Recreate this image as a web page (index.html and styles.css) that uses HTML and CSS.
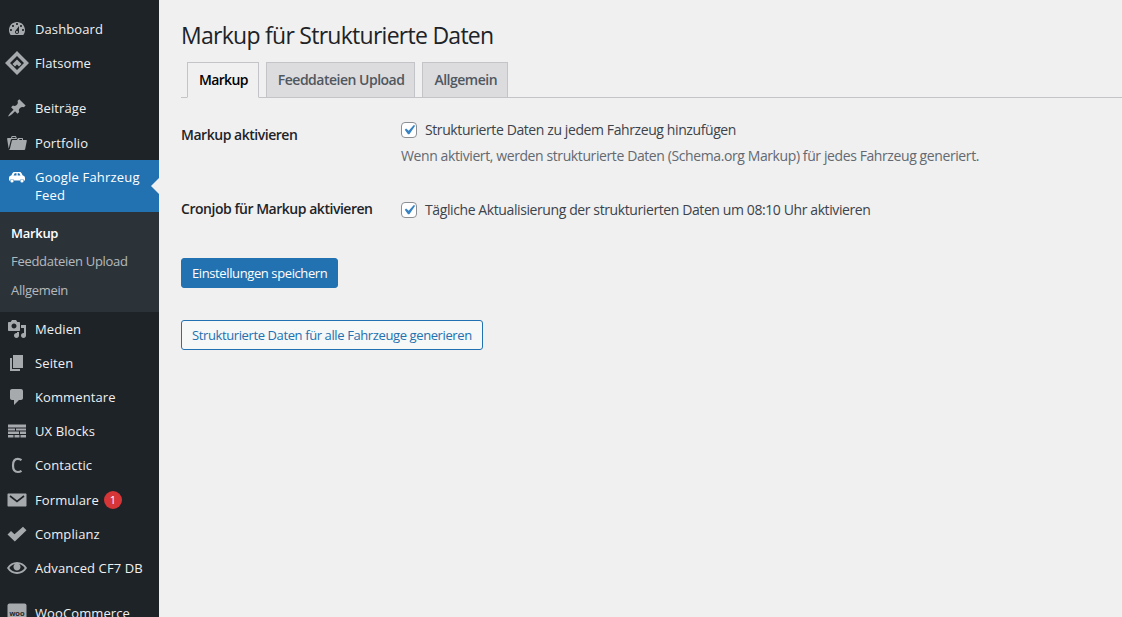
FILE: index.html
```html
<!DOCTYPE html>
<html lang="de">
<head>
<meta charset="utf-8">
<title>Markup für Strukturierte Daten</title>
<link rel="stylesheet" href="styles.css">
</head>
<body>
<div class="page">
<nav class="sidebar">
  <ul class="menu">
    <li class="item"><svg class="ico" viewBox="0 0 20 20"><path d="M3.76 16h12.48c1.1-1.37 1.76-3.11 1.76-5 0-4.42-3.58-8-8-8s-8 3.58-8 8c0 1.89.66 3.63 1.76 5zM10 4c.55 0 1 .45 1 1s-.45 1-1 1-1-.45-1-1 .45-1 1-1zM6 6c.55 0 1 .45 1 1s-.45 1-1 1-1-.45-1-1 .45-1 1-1zm8 0c.55 0 1 .45 1 1s-.45 1-1 1-1-.45-1-1 .45-1 1-1zm-5.37 5.55L12 7v6c0 1.1-.9 2-2 2s-2-.9-2-2c0-.57.24-1.08.63-1.45zM4 10c.55 0 1 .45 1 1s-.45 1-1 1-1-.45-1-1 .45-1 1-1zm12 0c.55 0 1 .45 1 1s-.45 1-1 1-1-.45-1-1 .45-1 1-1zm-5 3c0-.55-.45-1-1-1s-1 .45-1 1 .45 1 1 1 1-.45 1-1z"/></svg><span>Dashboard</span></li>
    <li class="item"><svg class="ico ico-flat" viewBox="0 0 24 24"><path fill-rule="evenodd" d="M12 0l12 12-12 12L0 12zM12 5l-7 7 7 7 7-7zM12 8.500l4.500 4.500-2.500 2.500-2-2-2 2-2.500-2.500z"/></svg><span>Flatsome</span></li>
    <li class="sep"></li>
    <li class="item"><svg class="ico" viewBox="0 0 20 20"><path d="M10.44 3.02l1.82-1.82 6.36 6.35-1.83 1.82c-1.05-.68-2.48-.57-3.41.36l-.75.75c-.92.93-1.04 2.35-.35 3.41l-1.83 1.82-2.41-2.41-2.8 2.79c-.42.42-3.38 2.71-3.8 2.29s1.86-3.39 2.28-3.81l2.79-2.79L4.1 9.36l1.83-1.82c1.05.69 2.48.57 3.4-.36l.75-.75c.93-.92 1.05-2.35.36-3.41z"/></svg><span>Beiträge</span></li>
    <li class="item"><svg class="ico" viewBox="0 0 20 20"><path d="M4 5H.78c-.37 0-.74.32-.69.84l1.56 9.99S3.5 8.47 3.86 6.7c.11-.53.61-.7.98-.7H10s-.7-2.08-.77-2.31C9.11 3.25 8.89 3 8.45 3H5.14c-.36 0-.7.23-.8.64C4.25 4.04 4 5 4 5zm4.88 0h-4s.42-1 .87-1h2.13c.48 0 1 1 1 1zM2.67 16.25c-.31.47-.76.75-1.26.75h15.73c.54 0 .92-.31 1.03-.83.44-2.19 1.68-8.44 1.68-8.44.07-.5-.3-.73-.62-.73H16V5.53c0-.16-.26-.53-.66-.53h-3.76c-.52 0-.87.58-.87.58L10 7H5.59c-.32 0-.63.19-.69.5 0 0-1.59 6.7-1.72 7.33-.07.37-.22.99-.51 1.42zM15.01 7H12l.63-1h2.38v1z"/></svg><span>Portfolio</span></li>
    <li class="item current"><svg class="ico" viewBox="0 0 20 20"><path fill-rule="evenodd" d="M7.500 5h5c1 0 1.600.5 2.100 1.300L15.700 8.500c1.400.3 2.300 1.200 2.300 2.500v2.500h-1a2.100 2.100 0 0 0-4 0H7a2.100 2.100 0 0 0-4 0H2V11c0-1.300.9-2.200 2.300-2.500L5.400 6.300C5.900 5.500 6.500 5 7.500 5zM7.800 6.300 6.500 8.500h3V6.300zM10.700 6.300v2.200h2.800L12.200 6.300zM5 12.300a1.600 1.600 0 1 1 0 3.200 1.600 1.600 0 0 1 0-3.200zM15 12.300a1.600 1.600 0 1 1 0 3.200 1.600 1.600 0 0 1 0-3.200z"/></svg><span>Google Fahrzeug Feed</span></li>
    <li class="submenu">
      <a class="sub active">Markup</a>
      <a class="sub">Feeddateien Upload</a>
      <a class="sub">Allgemein</a>
    </li>
    <li class="item"><svg class="ico" viewBox="0 0 20 20"><path d="M13 11V4c0-.55-.45-1-1-1h-1.670L9 1H5L3.670 3H2c-.55 0-1 .45-1 1v7c0 .55.45 1 1 1h10c.55 0 1-.45 1-1zM7 4.500c1.380 0 2.500 1.120 2.500 2.500S8.380 9.500 7 9.500 4.500 8.380 4.500 7 5.620 4.500 7 4.500zM14 6h5v10.500c0 1.380-1.120 2.500-2.500 2.500S14 17.880 14 16.500s1.120-2.500 2.500-2.500c.17 0 .34.02.5.05V9h-3V6zm-4 8.050V13h2v3.500c0 1.380-1.120 2.500-2.500 2.500S7 17.880 7 16.500 8.120 14 9.500 14c.17 0 .34.02.5.05z"/></svg><span>Medien</span></li>
    <li class="item"><svg class="ico" viewBox="0 0 20 20"><path d="M6 15V2h10v13H6zm-1 1h8v2H3V5h2v11z"/></svg><span>Seiten</span></li>
    <li class="item"><svg class="ico" viewBox="0 0 20 20"><path d="M5 2h9c1.100 0 2 .9 2 2v7c0 1.100-.9 2-2 2h-2l-5 5v-5H5c-1.100 0-2-.9-2-2V4c0-1.100.9-2 2-2z"/></svg><span>Kommentare</span></li>
    <li class="item"><svg class="ico" viewBox="0 0 20 20"><path d="M1 3.500h18v3H1zM1 7.500h7v2H1zM9 7.500h10v2H9zM1 10.500h11v2.500H1zM13 10.500h6v2.500h-6zM1 14h5.500v2.500H1zM7.500 14h5v2.500h-5zM13.500 14H19v2.500h-5.500z"/></svg><span>UX Blocks</span></li>
    <li class="item"><svg class="ico" viewBox="0 0 20 20"><path class="ring" d="M14.500 5.200C13 4 11.800 3.900 10.800 3.900 7.500 3.900 6 6.800 6 10.500 6 14.200 7.500 17 10.800 17 11.800 17 13 16.900 14.500 15.800"/></svg><span>Contactic</span></li>
    <li class="item"><svg class="ico" viewBox="0 0 20 20"><path d="M1.500 3.500h17c.6 0 1 .4 1 1v11c0 .6-.4 1-1 1h-17c-.6 0-1-.4-1-1v-11c0-.6.4-1 1-1z"/><path class="mail-v" d="M3 6l7 5.500L17 6"/></svg><span>Formulare</span><b class="badge">1</b></li>
    <li class="item"><svg class="ico" viewBox="0 0 20 20"><path d="M.5 10.500 4 7l3.500 3.200L16 2.800 19.500 6.300 7.800 17.500z"/></svg><span>Complianz</span></li>
    <li class="item"><svg class="ico" viewBox="0 0 20 20"><path d="M19.700 9.400C17.700 6 14 3.900 10 3.900S2.300 6 .3 9.400L0 10l.3.6c2 3.400 5.700 5.500 9.700 5.500s7.700-2.100 9.700-5.500l.3-.6-.3-.6zM10 14.100c-3.100 0-6-1.600-7.700-4.100C3.600 8 5.700 6.600 8 6.100c-.9.6-1.500 1.700-1.500 2.900 0 1.900 1.600 3.500 3.500 3.500s3.500-1.600 3.500-3.500c0-1.200-.6-2.300-1.500-2.900 2.300.5 4.400 1.900 5.700 3.900-1.700 2.500-4.600 4.100-7.700 4.100z"/></svg><span>Advanced CF7 DB</span></li>
    <li class="sep"></li>
    <li class="item"><svg class="ico" viewBox="0 0 20 20"><rect x="0.500" y="0.500" width="19" height="19" rx="2"/><text class="woo" x="10" y="12.500" text-anchor="middle">woo</text></svg><span>WooCommerce</span></li>
  </ul>
</nav>
<main class="content">
  <h1 class="title">Markup für Strukturierte Daten</h1>
  <div class="tabs">
    <a class="tab tab-on">Markup</a>
    <a class="tab">Feeddateien Upload</a>
    <a class="tab">Allgemein</a>
  </div>
  <div class="form">
    <div class="row row-first">
      <div class="label">Markup aktivieren</div>
      <div class="field">
        <label class="check"><span class="box"><svg viewBox="0 0 20 20"><path d="M14.830 4.890l1.340.94-5.810 8.380H9.020L5.780 9.670l1.340-1.250 2.570 2.400z"/></svg></span>Strukturierte Daten zu jedem Fahrzeug hinzufügen</label>
        <p class="desc">Wenn aktiviert, werden strukturierte Daten (Schema.org Markup) für jedes Fahrzeug generiert.</p>
      </div>
    </div>
    <div class="row">
      <div class="label label-tight">Cronjob für Markup aktivieren</div>
      <div class="field">
        <label class="check"><span class="box"><svg viewBox="0 0 20 20"><path d="M14.830 4.890l1.340.94-5.810 8.380H9.020L5.780 9.670l1.340-1.250 2.570 2.400z"/></svg></span>Tägliche Aktualisierung der strukturierten Daten um 08:10 Uhr aktivieren</label>
      </div>
    </div>
  </div>
  <button class="btn primary">Einstellungen speichern</button>
  <button class="btn secondary">Strukturierte Daten für alle Fahrzeuge generieren</button>
</main>
</div>
</body>
</html>
```
FILE: styles.css
```css
* { box-sizing: border-box; }
html, body { margin: 0; height: 100%; overflow: hidden; }
body {
  background: #f0f0f1;
  color: #3c434a;
  font-family: "Open Sans", "Noto Sans", sans-serif;
  font-size: 13px;
  line-height: 1.4;
}
.page { display: flex; height: 617px; overflow: hidden; }
.sidebar { width: 159px; flex: none; background: #1d2327; overflow: hidden; }
.menu { list-style: none; margin: 0; padding: 12px 0 0; }
.item {
  display: flex;
  align-items: flex-start;
  padding: 8px 8px 8px 7px;
  color: #f0f0f1;
  position: relative;
}
.item > span { margin-left: 8px; letter-spacing: 0.1px; }
.ico { width: 20px; height: 20px; flex: none; fill: #a7aaad; margin: -1px 0 -1px; }
.ico-flat { width: 24px; height: 24px; margin: -3px -2px -3px -2px; }
.ring { fill: none; stroke: #a7aaad; stroke-width: 2.200; }
.mail-v { fill: none; stroke: #1d2327; stroke-width: 1.600; }
.woo { fill: #1d2327; font-family: "Liberation Sans", sans-serif; font-size: 7.500px; font-weight: 700; }
.sep { height: 11px; }
.current { background: #2271b1; color: #fff; padding-right: 12px; }
.current > span { letter-spacing: 0.2px; }
.current .ico { fill: #fff; }
.current::after {
  content: "";
  position: absolute;
  right: 0;
  top: 18px;
  border: 8px solid transparent;
  border-right-color: #f0f0f1;
  border-left-width: 0;
}
.submenu {
  display: flex;
  flex-direction: column;
  background: #2c3338;
  padding: 7px 0 8px;
}
.sub { padding: 5px 12px 5px 11px; color: rgba(240, 246, 252, 0.7); letter-spacing: -0.3px; }
.sub.active { color: #fff; font-weight: 600; }
.badge {
  width: 18px;
  height: 18px;
  border-radius: 50%;
  background: #d63638;
  color: #fff;
  font-size: 11px;
  font-weight: 400;
  line-height: 18px;
  text-align: center;
  margin-left: 5px;
}
.content { flex: 1; padding: 0 0 0 22px; min-width: 0; }
.title { margin: 0; padding: 19px 0 0; font-size: 23px; font-weight: 400; line-height: 32px; color: #1d2327; letter-spacing: -0.73px; }
.tabs {
  display: flex;
  gap: 7px;
  margin-top: 11px;
  padding-left: 6px;
  height: 36px;
  border-bottom: 1px solid #c3c4c7;
}
.tab {
  height: 36px;
  padding: 0 10px 0 11px;
  border: 1px solid #c3c4c7;
  background: #dcdcde;
  color: #50575e;
  font-size: 14px;
  font-weight: 600;
  line-height: 34px;
  letter-spacing: -0.5px;
}
.tab-on { background: #f0f0f1; border-bottom-color: #f0f0f1; color: #000; letter-spacing: -0.65px; }
.form { margin-top: 20px; }
.row { display: flex; }
.row-first { height: 80px; }
.label { width: 220px; flex: none; font-size: 14px; font-weight: 600; color: #1d2327; letter-spacing: -0.47px; padding-top: 7px; line-height: 20px; }
.label-tight { padding-top: 1px; }
.check { display: flex; align-items: center; height: 24px; font-size: 14px; letter-spacing: -0.4px; }
.box {
  width: 16px;
  height: 16px;
  margin-right: 8px;
  border: 1px solid #8c8f94;
  border-radius: 4px;
  background: #fff;
  flex: none;
}
.box svg { display: block; width: 20px; height: 20px; margin: -3px 0 0 -3px; fill: #3582c4; }
.desc { margin: 4px 0 0; color: #646970; font-size: 14px; letter-spacing: -0.4px; }
.btn {
  display: block;
  height: 30px;
  padding: 0 10px;
  border: 1px solid #2271b1;
  border-radius: 3px;
  font: inherit;
  letter-spacing: -0.39px;
  line-height: 28px;
}
.primary { background: #2271b1; color: #fff; margin-top: 36px; }
.secondary { background: #f6f7f7; color: #2271b1; margin-top: 32px; }
```
